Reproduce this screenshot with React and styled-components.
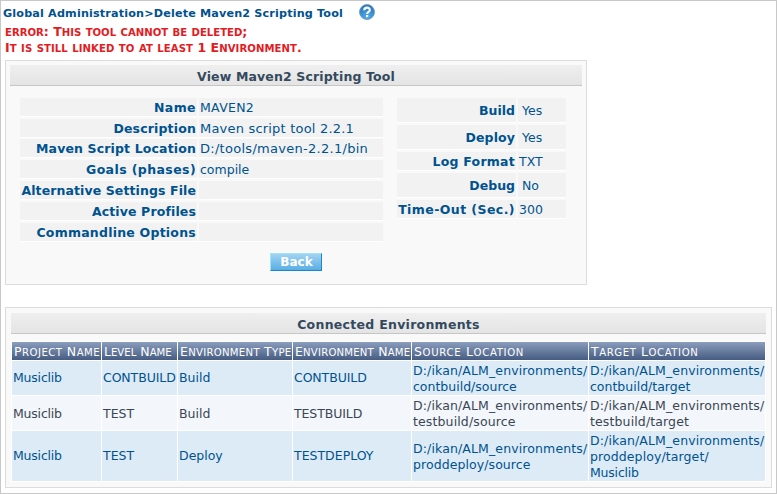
import React from "react";
import styled, { createGlobalStyle } from "styled-components";

const GlobalStyle = createGlobalStyle`
  *, *::before, *::after { box-sizing: border-box; }
  body {
    margin: 0;
    background: #fff;
    font-family: Verdana, "DejaVu Sans", sans-serif;
    font-size: 12.5px;
    color: #00528f;
  }
`;

const Page = styled.main`
  width: 777px;
  height: 494px;
  border: 1px solid #c8c8c8;
  padding-left: 4px;
  overflow: hidden;
`;

const Header = styled.header`
  display: flex;
  align-items: center;
  gap: 16px;
  height: 22px;
  margin-left: -2px;
`;

const Breadcrumb = styled.h1`
  margin: 0;
  width: 340px;
  padding-top: 4px;
  font-size: 11.2px;
  line-height: 16px;
  white-space: nowrap;
  letter-spacing: 0.16px;
`;

const ErrorText = styled.p`
  margin: 1px 0 0;
  font-size: 12.5px;
  font-weight: bold;
  line-height: 16px;
  color: #e31b23;
  white-space: nowrap;
`;

const Line = styled.span`
  display: block;
  letter-spacing: ${(p) => p.$track || 0}px;
`;

const SmallCap = styled.span`
  font-size: 0.81em;
  line-height: 1;
  text-transform: uppercase;
`;

const Panel = styled.section`
  width: ${(p) => p.$width}px;
  height: ${(p) => p.$height}px;
  margin-top: ${(p) => p.$top}px;
  padding: ${(p) => p.$pad};
  border: 1px solid #dcdcdc;
  background: #f9f9f9;
`;

const PanelTitle = styled.h2`
  margin: 0;
  height: 21px;
  padding-top: 3px;
  border-bottom: 1px solid #c6c6c6;
  background: linear-gradient(#efefef, #e4e4e4);
  color: #34495e;
  font-size: 12.5px;
  line-height: 18px;
  text-align: center;
  letter-spacing: ${(p) => p.$track || 0}px;
`;

const FieldColumns = styled.div`
  display: flex;
  gap: 14px;
  padding: 12px 0 0 10px;
`;

const FieldGrid = styled.dl`
  display: grid;
  grid-template-columns: ${(p) => p.$cols};
  grid-template-rows: ${(p) => p.$rows};
  column-gap: 2px;
  margin: 0;
  height: 146px;
`;

const Label = styled.dt`
  display: flex;
  align-items: center;
  justify-content: flex-end;
  height: ${(p) => p.$height}px;
  padding-right: 1px;
  background: #f2f2f2;
  box-shadow: 0 1px #fff;
  font-weight: bold;
  white-space: nowrap;
  letter-spacing: ${(p) => p.$track || 0}px;
`;

const Value = styled.dd`
  display: flex;
  align-items: center;
  height: ${(p) => p.$height}px;
  margin: 0;
  padding-left: ${(p) => (p.$height > 18 ? 4 : 1)}px;
  background: #f2f2f2;
  box-shadow: 0 1px #fff;
  white-space: nowrap;
  font-size: ${(p) => p.$size || 12.5}px;
  letter-spacing: ${(p) => p.$track || 0}px;
`;

const BackButton = styled.button`
  display: block;
  width: 52px;
  height: 18px;
  margin: 9px auto 0 260px;
  padding: 1px 0 0 1px;
  border: 1px solid;
  border-color: #a5e4f5 #1c86c8 #1c86c8 #a5e4f5;
  background: linear-gradient(#a0d3f2, #5aaee4);
  color: #fff;
  font: bold 12px/15px Verdana, "DejaVu Sans", sans-serif;
`;

const EnvTable = styled.div`
  display: grid;
  grid-template-columns: 89px 75px 114px 118px 176px 176px;
  grid-template-rows: 18px 34px 34px 50px;
  gap: 1px;
  margin-top: 7px;
  padding: 1px;
  background: #fff;
`;

const HeadCell = styled.div`
  padding-left: 2px;
  background: linear-gradient(#8b9dbd, #465c82);
  color: #fff;
  line-height: 19px;
  white-space: nowrap;
  overflow: hidden;
  letter-spacing: ${(p) => p.$track || 0}px;
`;

const Cell = styled.div`
  display: flex;
  flex-direction: column;
  justify-content: center;
  padding: ${(p) => (p.$lines > 1 ? 2 : 0)}px 0 0 1px;
  background: ${(p) => (p.$alt ? "#f3f6fb" : "#ddebf7")};
  color: ${(p) => (p.$alt ? "#3a4654" : "#00528f")};
  line-height: 16px;
  white-space: nowrap;
`;

const HelpIcon = () => (
  <svg width="16" height="16" viewBox="0 0 16 16">
    <defs>
      <radialGradient id="help" cx="50%" cy="85%" r="80%">
        <stop offset="0" stopColor="#4fb0ee" />
        <stop offset="1" stopColor="#2874b8" />
      </radialGradient>
    </defs>
    <circle cx="8" cy="8" r="7.5" fill="url(#help)" stroke="#7c9fbd" />
    <path d="M5.2 6.2C5.3 2.8 10.8 2.8 10.8 6C10.8 8 8.1 7.9 8.1 10" fill="none" stroke="#fff" strokeWidth="2.1" />
    <rect x="7" y="11" width="2.2" height="2.1" fill="#fff" />
  </svg>
);

// Small capitals at 81% of the cap size, larger than the browser's synthetic ones.
const SmallCaps = ({ children }) =>
  children
    .split(/([a-z]+)/)
    .filter(Boolean)
    .map((part, i) => (/[a-z]/.test(part) ? <SmallCap key={i}>{part}</SmallCap> : part));

const leftFields = [
  ["Name", "MAVEN2", 0.4, 0.3],
  ["Description", "Maven script tool 2.2.1", 0.16, 0.2, 13],
  ["Maven Script Location", "D:/tools/maven-2.2.1/bin", 0.14, 0.28, 13],
  ["Goals (phases)", "compile", 0.4, 0],
  ["Alternative Settings File", "", 0.1, 0],
  ["Active Profiles", "", 0.13, 0],
  ["Commandline Options", "", 0.23, 0],
];

const rightFields = [
  ["Build", "Yes", 24, 0],
  ["Deploy", "Yes", 24, 0.1],
  ["Log Format", "TXT", 18, 0.25],
  ["Debug", "No", 24, 0],
  ["Time-Out (Sec.)", "300", 18, 0.43],
];

const headings = [
  ["Project Name", 0.47],
  ["Level Name", 0],
  ["Environment Type", 0.28],
  ["Environment Name", 0.2],
  ["Source Location", 0.67],
  ["Target Location", 0.57],
];

const tracking = {
  Musiclib: -0.2,
  CONTBUILD: -0.1,
  TESTBUILD: -0.1,
  "D:/ikan/ALM_environments/": 0.12,
  "testbuild/source": 0.13,
  "testbuild/target": 0.13,
  "proddeploy/source": 0.08,
  "proddeploy/target/": 0.1,
};

const environments = [
  ["Musiclib", "CONTBUILD", "Build", "CONTBUILD", "D:/ikan/ALM_environments/|contbuild/source", "D:/ikan/ALM_environments/|contbuild/target"],
  ["Musiclib", "TEST", "Build", "TESTBUILD", "D:/ikan/ALM_environments/|testbuild/source", "D:/ikan/ALM_environments/|testbuild/target"],
  ["Musiclib", "TEST", "Deploy", "TESTDEPLOY", "D:/ikan/ALM_environments/|proddeploy/source", "D:/ikan/ALM_environments/|proddeploy/target/|Musiclib"],
];

export default function App() {
  return (
    <>
      <GlobalStyle />
      <Page>
        <Header>
          <Breadcrumb>Global Administration&gt;Delete Maven2 Scripting Tool</Breadcrumb>
          <HelpIcon />
        </Header>
        <ErrorText>
          <Line><SmallCaps>error: This tool cannot be deleted;</SmallCaps></Line>
          <Line $track={0.06}><SmallCaps>It is still linked to at least 1 Environment.</SmallCaps></Line>
        </ErrorText>
        <Panel $width={582} $height={225} $top={4} $pad="4px">
          <PanelTitle $track={0.14}>View Maven2 Scripting Tool</PanelTitle>
          <FieldColumns>
            <FieldGrid $cols="177px 184px" $rows="21px 20px repeat(5, 21px)">
              {leftFields.map(([label, value, labelTrack, valueTrack, size]) => (
                <React.Fragment key={label}>
                  <Label $height={18} $track={labelTrack}>{label}</Label>
                  <Value $height={18} $track={valueTrack} $size={size}>{value}</Value>
                </React.Fragment>
              ))}
            </FieldGrid>
            <FieldGrid $cols="119px 48px" $rows="27px 27px 21px 27px 21px">
              {rightFields.map(([label, value, height, track]) => (
                <React.Fragment key={label}>
                  <Label $height={height} $track={track}>{label}</Label>
                  <Value $height={height}>{value}</Value>
                </React.Fragment>
              ))}
            </FieldGrid>
          </FieldColumns>
          <BackButton>Back</BackButton>
        </Panel>
        <Panel $width={767} $height={181} $top={22} $pad="5px">
          <PanelTitle $track={0.28}>Connected Environments</PanelTitle>
          <EnvTable>
            {headings.map(([text, track]) => (
              <HeadCell key={text} $track={track}><SmallCaps>{text}</SmallCaps></HeadCell>
            ))}
            {environments.map((row, r) =>
              row.map((text, c) => {
                const lines = text.split("|");
                return (
                  <Cell key={`${r}-${c}`} $alt={r === 1} $lines={r === 1 ? 2 : lines.length}>
                    {lines.map((line) => (
                      <Line key={line} $track={tracking[line]}>{line}</Line>
                    ))}
                  </Cell>
                );
              })
            )}
          </EnvTable>
        </Panel>
      </Page>
    </>
  );
}
